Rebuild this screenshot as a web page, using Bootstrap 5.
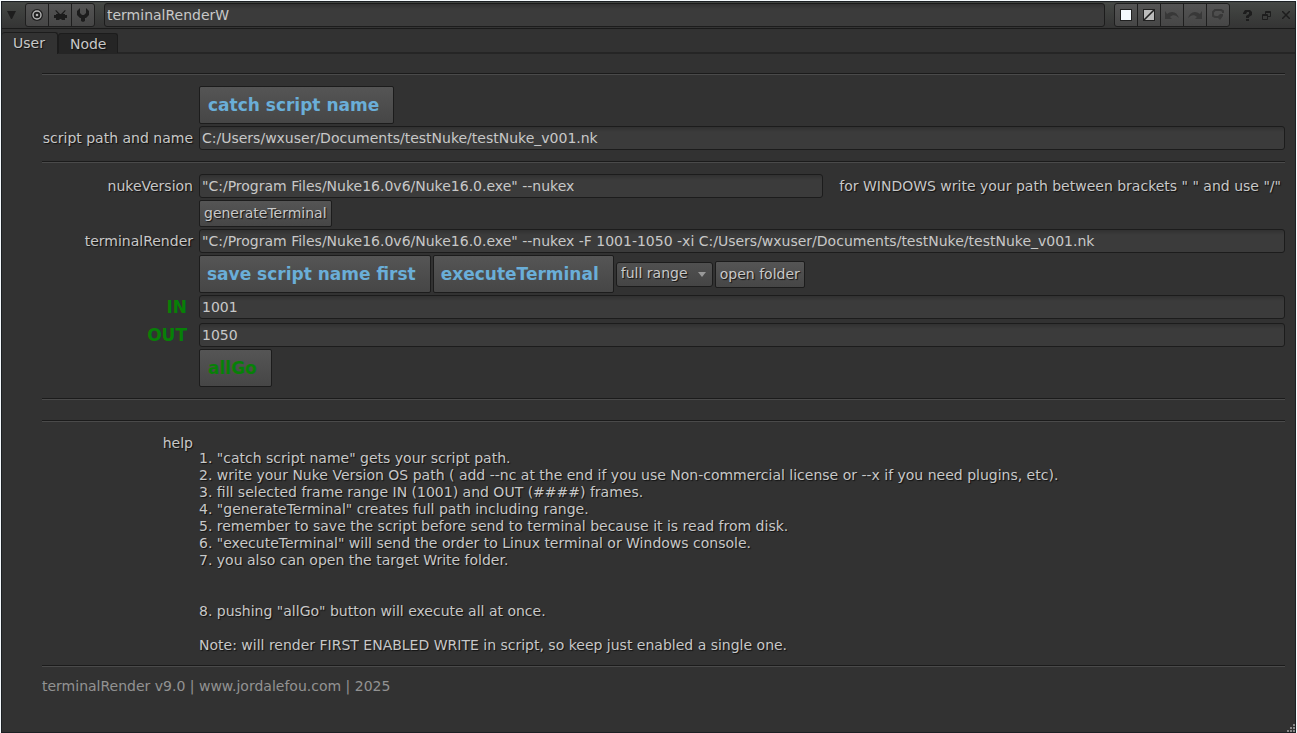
<!DOCTYPE html>
<html lang="en">
<head>
<meta charset="utf-8">
<meta name="viewport" content="width=device-width, initial-scale=1">
<title>terminalRenderW</title>
<link href="https://cdn.jsdelivr.net/npm/bootstrap@5.3.0/dist/css/bootstrap.min.css" rel="stylesheet">
<style>
body { background: #f4f9fc; color: #c8c8c8; font: 14px/17px "DejaVu Sans", sans-serif; padding: 1px 1px 0; }
.panel { min-height: calc(100vh - 1px); background: #323232; border: 1px solid #1c2023; position: relative; }
.titlebar { height: 27px; background: linear-gradient(#454845, #343434); border-bottom: 1px solid #1a1a1a; }
.titlebar .btn-group { flex: none; }
.titlebar .field { margin: 0 9px; }
.btn-group > .tool { flex: none; width: 24px; height: 24px; padding: 0; color: #1c1c1c; background: linear-gradient(#545454, #464646); border: 1px solid #1e1e1e; border-radius: 3px; line-height: 1; }
.plain { flex: none; width: 19px; height: 24px; padding: 0; border: 0; background: none; color: #1d1d1d; line-height: 1; }
.plain svg, .tool svg { display: block; margin: auto; }
.shade { text-shadow: 1px 1px 1px #111; }
.field, .field:focus { height: 24px; min-width: 0; padding: 0 2px 1px; font-size: 14px; line-height: 17px; color: #c8c8c8; background: linear-gradient(#313131, #3b3b3b 5px); border: 1px solid #1c1c1c; border-radius: 3px; box-shadow: none; }
.tabs { height: 25px; padding-top: 3px; border-bottom: 2px solid #252525; }
.tabs .nav-link { height: 20px; padding: 0 11px; font-size: 14px; line-height: 20px; color: #c8c8c8; background: #252525; border: 1px solid #1c1c1c; border-bottom: 0; border-radius: 3px 3px 0 0; margin: 1px 0 0; }
.tabs .nav-link.active { height: 22px; padding-right: 12px; color: #c8c8c8; background: #323232; border-color: #1c1c1c; border-left: 0; margin: 0; }
.body-area { padding: 19px 10px 36px 40px; }
.rule { height: 2px; margin: 0; opacity: 1; border: 0; border-top: 1px solid #1b1b1b; background: #4a4a4a; }
.rule + .rule { margin-top: 20px; }
.knobs { display: grid; grid-template-columns: 151px minmax(0, 1fr); column-gap: 6px; row-gap: 2px; align-items: center; padding: 11px 0; }
.knobs > label, .knobs > .tag { text-align: right; white-space: nowrap; }
.knobs > .start { grid-column: 2; }
.knobs > .spaced { margin-bottom: 2px; }
.commands { gap: 2px; }
.green { color: #078007; font-weight: bold; font-size: 17px; line-height: 24px; padding-right: 6px; }
.push { height: 27px; padding: 0 4px; font-size: 14px; line-height: 17px; color: #c8c8c8; background: linear-gradient(#555, #464646); border: 1px solid #1c1c1c; border-radius: 2px; white-space: nowrap; }
.push:hover { color: #fff; border-color: #1c1c1c; }
.big { height: 38px; padding: 0 14px 0 8px; font-size: 17px; line-height: 24px; font-weight: bold; color: #6aaed8; }
.commands .big { padding-left: 7px; }
.big-go { color: #078007; }
.range { width: 97px; height: 25px; padding: 0 20px 1px 4px; font-size: 14px; line-height: 17px; color: #c8c8c8; border: 1px solid #1c1c1c; border-radius: 3px; background: url("data:image/svg+xml,%3Csvg xmlns='http://www.w3.org/2000/svg' width='8' height='5'%3E%3Cpath d='M0 0h8L4 5z' fill='%23999'/%3E%3C/svg%3E") no-repeat right 6px center / 8px 5px, linear-gradient(#505050, #454545); }
.tag { padding-top: 2px; }
.help-list { padding-top: 17px; white-space: pre-line; }
.foot { color: #929292; padding-top: 11px; }
.grip { position: absolute; right: 0; bottom: 0; }
</style>
</head>
<body>
<main class="panel d-flex flex-column">
  <header class="titlebar d-flex align-items-center">
    <button class="plain" type="button" aria-label="Collapse"><svg width="9" height="8"><path d="M0 0h9L5 8H4z" fill="currentColor"/></svg></button>
    <div class="btn-group ms-1">
      <button class="btn tool" type="button" aria-label="Center node"><svg width="12" height="12"><circle cx="6" cy="6" r="6" fill="#202020"/><circle cx="6" cy="6" r="4" fill="none" stroke="#b5b5b5" stroke-width="1.400"/><circle cx="6" cy="6" r="1.300" fill="#b5b5b5"/></svg></button>
      <button class="btn tool" type="button" aria-label="Input node"><svg width="13" height="11"><path d="M2 0l4 4h1l4-4 .7.7L9 4h2v1h2v3h-2v2H8L7 9H6l-1 1H2V8H0V5h2V4h2L1.300.7z" fill="currentColor"/></svg></button>
      <button class="btn tool" type="button" aria-label="Settings"><svg width="12" height="14"><path d="M3 0L0 3v4l3 3h1v3l2 1 2-1v-3h1l3-3V3L9 0v5L7 7H5L3 5z" fill="currentColor"/></svg></button>
    </div>
    <input class="form-control field flex-grow-1" aria-label="Node name" value="terminalRenderW">
    <div class="btn-group me-2">
      <button class="btn tool" type="button" aria-label="Node colour"><svg width="12" height="12"><rect x=".5" y=".5" width="11" height="11" fill="#f5faff" stroke="#202020"/></svg></button>
      <button class="btn tool" type="button" aria-label="Viewer colour"><svg width="12" height="12"><rect x=".5" y=".5" width="11" height="11" fill="#bbb" stroke="#202020"/><path d="M1 11L11 1" stroke="#202020" stroke-width="1.600"/></svg></button>
      <button class="btn tool" type="button" aria-label="Undo"><svg width="14" height="10"><path d="M0 1v8h7L5 7c3-3 6-2 9 1C12 2 7 0 2 4z" fill="#383838"/></svg></button>
      <button class="btn tool" type="button" aria-label="Redo"><svg width="14" height="10"><path d="M14 1v8H7l2-2C6 4 3 5 0 8 2 2 7 0 12 4z" fill="#383838"/></svg></button>
      <button class="btn tool" type="button" aria-label="Revert"><svg width="12" height="12"><path d="M11 4V2L9 1H3L1 3v4l2 1h4" fill="none" stroke="#383838" stroke-width="2"/><path d="M5 8l3-3h3v2L8 11z" fill="#383838"/></svg></button>
    </div>
    <button class="plain ms-auto" type="button" aria-label="Help"><svg width="9" height="11"><path d="M0 3l2-3h5l2 2v3L6 7v1H3V6l3-2V2H4L3 4H0zM3 9h3v2H3z" fill="currentColor"/></svg></button>
    <button class="plain" type="button" aria-label="Float"><svg width="9" height="9"><path d="M3.500 3V.5h5v5H6M3 1.500h6M.5 3.500h5v5h-5zM0 4.500h6" fill="none" stroke="currentColor"/></svg></button>
    <button class="plain" type="button" aria-label="Close"><svg width="8" height="8"><path d="M0 0l8 8M8 0L0 8" stroke="currentColor" stroke-width="1.500"/></svg></button>
  </header>

  <nav class="nav tabs shade" aria-label="Panel tabs">
    <a class="nav-link active" aria-current="page" href="#user">User</a>
    <a class="nav-link" href="#node">Node</a>
  </nav>

  <section id="user" class="body-area flex-grow-1">
    <hr class="rule">
    <div class="knobs">
      <button class="btn push big start me-auto" type="button">catch script name</button>
      <label class="shade" for="path">script path and name</label>
      <input id="path" class="form-control field" value="C:/Users/wxuser/Documents/testNuke/testNuke_v001.nk">
    </div>
    <hr class="rule">
    <div class="knobs">
      <label class="shade" for="version">nukeVersion</label>
      <div class="d-flex align-items-center">
        <input id="version" class="form-control field flex-grow-1" value="&quot;C:/Program Files/Nuke16.0v6/Nuke16.0.exe&quot; --nukex">
        <span class="shade text-nowrap ms-3 pe-1">for WINDOWS write your path between brackets " " and use "/"</span>
      </div>
      <button class="btn push shade start me-auto" type="button">generateTerminal</button>
      <label class="shade" for="command">terminalRender</label>
      <input id="command" class="form-control field" value="&quot;C:/Program Files/Nuke16.0v6/Nuke16.0.exe&quot; --nukex -F 1001-1050 -xi C:/Users/wxuser/Documents/testNuke/testNuke_v001.nk">
      <div class="commands start d-flex align-items-center">
        <button class="btn push big" type="button">save script name first</button>
        <button class="btn push big" type="button">executeTerminal</button>
        <select class="form-select range shade" aria-label="Frame range"><option>full range</option></select>
        <button class="btn push shade" type="button">open folder</button>
      </div>
      <label class="green spaced" for="first">IN</label>
      <input id="first" class="form-control field spaced" value="1001">
      <label class="green" for="last">OUT</label>
      <input id="last" class="form-control field" value="1050">
      <button class="btn push big big-go start me-auto" type="button">allGo</button>
    </div>
    <hr class="rule">
    <hr class="rule">
    <div class="knobs align-items-start">
      <span class="tag shade">help</span>
      <div class="help-list shade">1. "catch script name" gets your script path.
2. write your Nuke Version OS path ( add --nc at the end if you use Non-commercial license or --x if you need plugins, etc).
3. fill selected frame range IN (1001) and OUT (####) frames.
4. "generateTerminal" creates full path including range.
5. remember to save the script before send to terminal because it is read from disk.
6. "executeTerminal" will send the order to Linux terminal or Windows console.
7. you also can open the target Write folder.


8. pushing "allGo" button will execute all at once.

Note: will render FIRST ENABLED WRITE in script, so keep just enabled a single one.</div>
    </div>
    <hr class="rule">
    <p class="foot mb-0">terminalRender v9.0 | www.jordalefou.com | 2025</p>
  </section>
  <svg class="grip" width="8" height="8"><path d="M6 0h2v2H6zM3 3h2v2H3zM6 3h2v2H6zM0 6h2v2H0zM3 6h2v2H3zM6 6h2v2H6z" fill="#888"/></svg>
</main>
<script src="https://cdn.jsdelivr.net/npm/bootstrap@5.3.0/dist/js/bootstrap.bundle.min.js"></script>
</body>
</html>
